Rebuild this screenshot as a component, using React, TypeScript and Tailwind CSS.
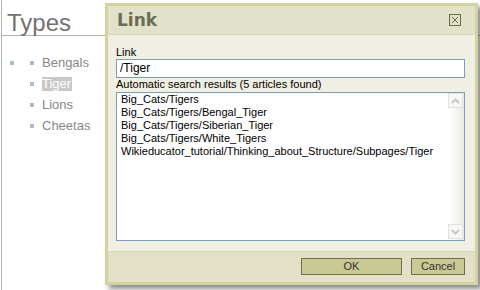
const results = [
  "Big_Cats/Tigers",
  "Big_Cats/Tigers/Bengal_Tiger",
  "Big_Cats/Tigers/Siberian_Tiger",
  "Big_Cats/Tigers/White_Tigers",
  "Wikieducator_tutorial/Thinking_about_Structure/Subpages/Tiger",
];

const cats = ["Bengals", "Tiger", "Lions", "Cheetas"];

const CloseIcon = () => (
  <svg width="12" height="12" viewBox="0 0 12 12" shapeRendering="crispEdges">
    <rect x="0.5" y="0.5" width="11" height="11" fill="none" stroke="#6b6b4e" />
    <path d="M3 3 L9 9 M9 3 L3 9" stroke="#6b6b4e" strokeWidth="1" shapeRendering="auto" />
  </svg>
);

const Arrow = ({ up }: { up: boolean }) => (
  <svg width="9" height="6" viewBox="0 0 9 6">
    <path
      d={up ? "M1 5 L4.5 1.5 L8 5" : "M1 1 L4.5 4.5 L8 1"}
      fill="none"
      stroke="#c9c9c4"
      strokeWidth="2"
    />
  </svg>
);

const App = () => {
  return (
    <div className="relative h-[290px] w-[480px] overflow-hidden bg-white font-['Liberation_Sans',Arial,sans-serif]">
      {/* page behind the dialog */}
      <div className="ml-[1px] h-full border-l border-[#b4b4b4]">
        <h1 className="h-[36px] border-b border-[#b4b4b4] pl-[5px] pt-[11px] text-[24px] leading-[24px] text-[#727272]">
          Types
        </h1>
        <div className="mt-[16px] flex pl-[8px]">
          <span className="mt-[9px] h-[4px] w-[4px] bg-[#aabdc8]" />
          <ul className="ml-[16px]">
            {cats.map((c) => (
              <li key={c} className="flex h-[21px] items-center text-[13px] text-[#888]">
                <span className="mr-[8px] h-[4px] w-[4px] bg-[#aabdc8]" />
                {c === "Tiger" ? (
                  <span className="bg-[#c8c8c8] pr-[1px] leading-[14px] text-white">{c}</span>
                ) : (
                  <span className="leading-[14px]">{c}</span>
                )}
              </li>
            ))}
          </ul>
        </div>
      </div>

      {/* dialog */}
      <div className="absolute left-[105px] top-[3px] flex h-[282px] w-[373px] flex-col border-[3px] border-[#d4d29e] shadow-[4px_4px_5px_rgba(0,0,0,0.45)]">
        <div className="flex h-[29px] items-start justify-between border-b border-[#d9d7b3] bg-[#e2e1c9] pl-[9px] pr-[14px]">
          <span className="font-['DejaVu_Sans',Verdana,sans-serif] text-[17px] font-bold leading-[28px] text-[#6d6d55]">
            Link
          </span>
          <span className="mt-[8px]">
            <CloseIcon />
          </span>
        </div>

        <div className="flex flex-1 flex-col bg-[#efefe3] pl-[8px] pr-[10px] pt-[11px] text-[11px] leading-[13px] text-black">
          <label>Link</label>
          <div className="flex h-[19px] items-center border border-[#7f9db9] bg-white pl-[3px] text-[12px]">
            /Tiger
          </div>
          <div className="mb-[1px]">Automatic search results (5 articles found)</div>
          <div className="flex h-[149px] border border-[#7f9db9] bg-white">
            <ul className="flex-1 pl-[4px]">
              {results.map((r) => (
                <li key={r}>{r}</li>
              ))}
            </ul>
            <div className="flex w-[16px] flex-col justify-between bg-gradient-to-r from-white to-[#ebebe3] pb-[1px] pr-[1px]">
              <div className="flex h-[15px] items-center justify-center border border-[#e2e2da] bg-[#f7f7f4]">
                <Arrow up />
              </div>
              <div className="flex h-[15px] items-center justify-center border border-[#e2e2da] bg-[#f7f7f4]">
                <Arrow up={false} />
              </div>
            </div>
          </div>
        </div>

        <div className="flex h-[31px] items-start justify-end gap-[9px] border-t border-[#d9d7b3] bg-[#e2e1c7] pr-[10px] pt-[6px]">
          <button className="h-[17px] w-[101px] border border-[#6e6e50] bg-[#c9c994] text-[11px] leading-[15px] text-[#333]">
            OK
          </button>
          <button className="h-[17px] w-[54px] border border-[#6e6e50] bg-[#c9c994] text-[11px] leading-[15px] text-[#333]">
            Cancel
          </button>
        </div>
      </div>
    </div>
  );
};

export default App;
